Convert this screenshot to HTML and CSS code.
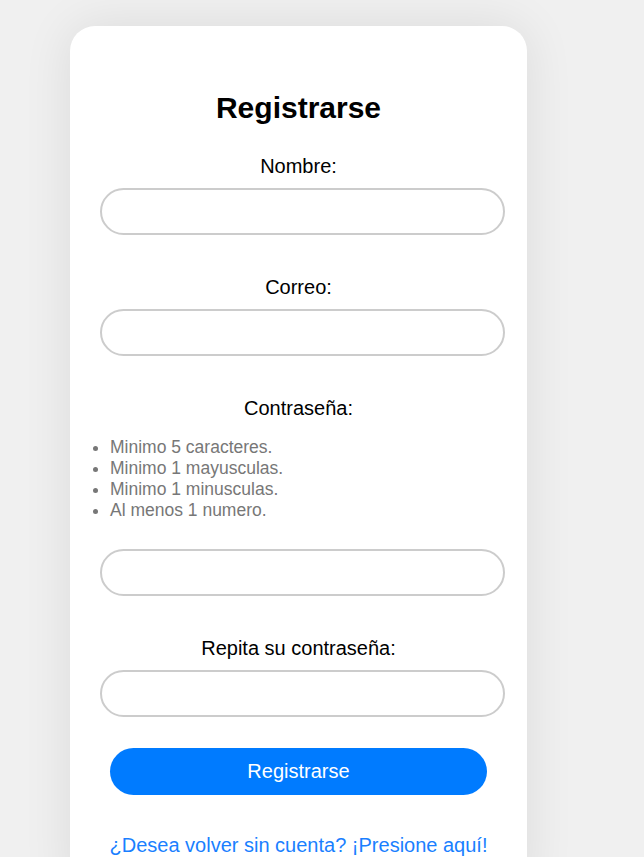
FILE: index.html
```html
<!DOCTYPE html>
<html lang="es">
<head>
<meta charset="utf-8">
<title>Registrarse</title>
<link rel="stylesheet" href="styles.css">
</head>
<body>
<div class="page">
  <form class="card">
    <h2 class="title">Registrarse</h2>
    <div class="field">
      <label class="label" for="nombre">Nombre:</label>
      <input class="input" id="nombre" type="text">
    </div>
    <div class="field">
      <label class="label" for="correo">Correo:</label>
      <input class="input" id="correo" type="email">
    </div>
    <div class="field">
      <label class="label" for="pass">Contraseña:</label>
      <ul class="rules">
        <li>Minimo 5 caracteres.</li>
        <li>Minimo 1 mayusculas.</li>
        <li>Minimo 1 minusculas.</li>
        <li>Al menos 1 numero.</li>
      </ul>
      <input class="input" id="pass" type="password">
    </div>
    <div class="field field-last">
      <label class="label" for="pass2">Repita su contraseña:</label>
      <input class="input" id="pass2" type="password">
    </div>
    <button class="btn" type="button">Registrarse</button>
    <p class="back"><a class="back-link" href="#">¿Desea volver sin cuenta? ¡Presione aquí!</a></p>
  </form>
</div>
</body>
</html>
```

FILE: styles.css
```css
html, body {
  margin: 0;
  padding: 0;
  background: #f0f0f0;
  font-family: "Liberation Sans", Arial, sans-serif;
}

.page {
  padding: 26px 0 40px 70px;
}

.card {
  display: block;
  width: 457px;
  box-sizing: border-box;
  padding: 64.5px 30px 40px;
  background: #ffffff;
  border-radius: 25px;
  box-shadow: 0 0 50px rgba(0, 0, 0, 0.09);
  text-align: center;
}

.title {
  margin: 0 0 30px;
  font-size: 30px;
  font-weight: bold;
  line-height: normal;
  color: #000;
}

.field {
  margin-bottom: 41px;
}

.field-last {
  margin-bottom: 31px;
}

.label {
  display: block;
  font-size: 20px;
  line-height: 23px;
  margin-bottom: 10px;
  color: #000;
}

.rules {
  margin: 17.5px 0 27.5px;
  padding-left: 10px;
  text-align: left;
  font-size: 17.5px;
  line-height: 21px;
  color: #777;
}

.input {
  display: block;
  width: 405px;
  height: 47px;
  box-sizing: border-box;
  margin: 0;
  padding: 0 14px;
  border: 2px solid #cccccc;
  border-radius: 24px;
  background: #fff;
  font-family: inherit;
  font-size: 18px;
  outline: none;
}

.btn {
  display: block;
  width: 377px;
  height: 47px;
  margin: 0 auto;
  padding: 0;
  border: none;
  border-radius: 24px;
  background: #007bff;
  color: #fff;
  font-family: inherit;
  font-size: 20px;
  cursor: pointer;
}

.back {
  margin: 39.5px 0 0;
  font-size: 20px;
  line-height: 23px;
}

.back-link {
  color: #1a7fff;
  text-decoration: none;
}
```
